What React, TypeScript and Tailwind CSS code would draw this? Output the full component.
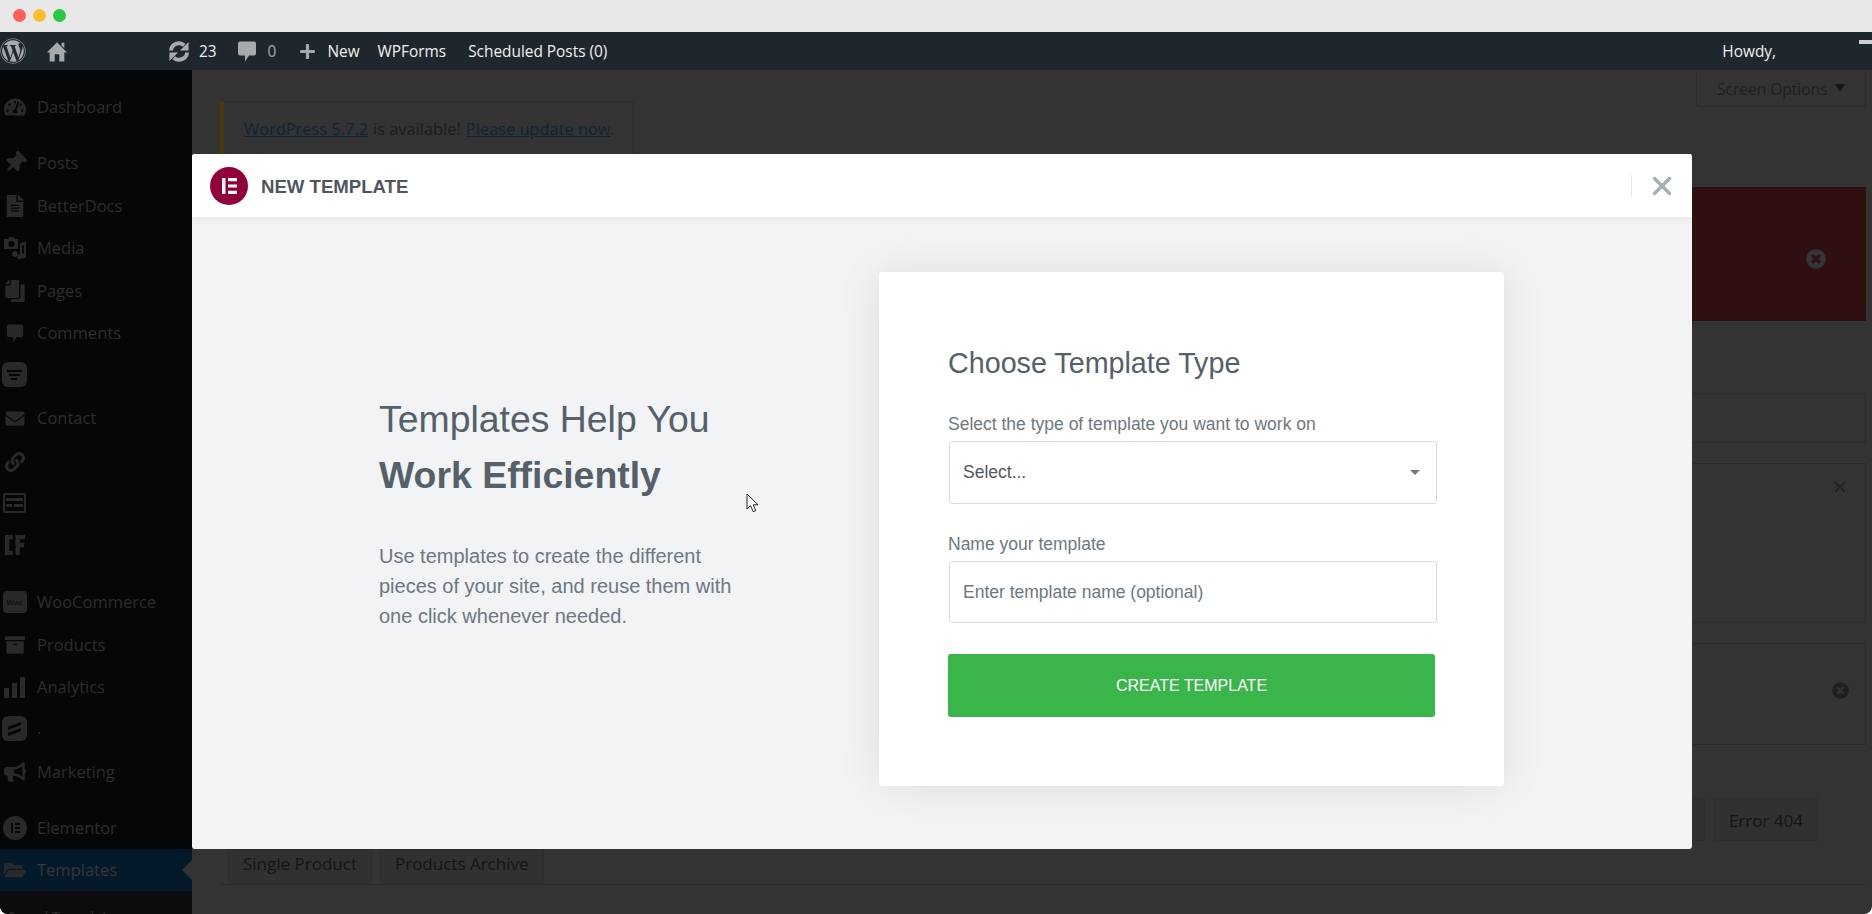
import { FaArchive, FaBullhorn, FaCopy, FaEnvelope, FaFileAlt, FaFolderOpen, FaLink, FaPlus, FaTachometerAlt, FaThumbtack, FaWordpress, FaTimesCircle } from 'react-icons/fa';
import { X } from 'lucide-react';
import type { ReactNode } from 'react';

const wpFont = "font-['Open_Sans',sans-serif]";
const formFont = "font-['Liberation_Sans',Arial,sans-serif]";

function CommentIcon({ className }: { className?: string }) {
    return (
        <svg viewBox="0 0 20 22" className={className} fill="currentColor">
            <path d="M3 1h14a2 2 0 0 1 2 2v10a2 2 0 0 1-2 2h-5l-4 6v-6H3a2 2 0 0 1-2-2V3a2 2 0 0 1 2-2z" />
        </svg>
    );
}

function HomeIcon({ className }: { className?: string }) {
    return (
        <svg viewBox="0 0 24 24" className={className} fill="currentColor">
            <path d="M12 2l11 11h-3v10h-5.500v-8h-5v8H4V13H1z" />
            <path d="M17 2.500h3v6l-3-3z" />
        </svg>
    );
}

function UpdateIcon({ className }: { className?: string }) {
    return (
        <svg viewBox="0 0 24 24" className={className}>
            <g fill="currentColor" stroke="currentColor">
                <path d="M3.500 11a8.500 8.500 0 0 1 14-5.500" fill="none" strokeWidth="4" />
                <path d="M22 2v9h-9z" strokeWidth="0" />
                <path d="M20.500 13a8.500 8.500 0 0 1-14 5.500" fill="none" strokeWidth="4" />
                <path d="M2 22v-9h9z" strokeWidth="0" />
            </g>
        </svg>
    );
}

function MediaIcon() {
    return (
        <svg viewBox="0 0 24 24" className="h-[24px] w-[24px]" fill="currentColor">
            <path d="M1 3h4l1.500-2h4L12 3h3v10H1zM8.500 5a3 3 0 1 0 0 6 3 3 0 0 0 0-6z" />
            <path d="M17 7l6-1v14a2.500 2.500 0 1 1-2-2.400V9l-2 .4V21a2.500 2.500 0 1 1-2-2.400z" />
            <path d="M12 15a3 3 0 1 0 .01 0z" />
        </svg>
    );
}

function ElementorGlyph({ className }: { className?: string }) {
    return (
        <svg viewBox="0 0 38 38" className={className}>
            <circle cx="19" cy="19" r="19" fill="currentColor" />
            <path d="M12 11h3.500v16H12zM18 11h9v3.200h-9zM18 17.400h9v3.200h-9zM18 23.800h9V27h-9z" fill="#fff" />
        </svg>
    );
}

function ElementorCircle() {
    return (
        <svg viewBox="0 0 24 24" className="h-[24px] w-[24px]">
            <circle cx="12" cy="12" r="12" fill="currentColor" />
            <path d="M8 7h2v10H8zM12 7h5v2h-5zM12 11h5v2h-5zM12 15h5v2h-5z" fill="#050608" />
        </svg>
    );
}

const sideIcon = 'h-[22px] w-[22px]';

const menu: { label: string; gap: string; icon: ReactNode; active?: boolean }[] = [
    { label: 'Dashboard', gap: 'mt-0', icon: <FaTachometerAlt className={sideIcon} /> },
    { label: 'Posts', gap: 'mt-[14px]', icon: <FaThumbtack className={`${sideIcon} rotate-45`} /> },
    { label: 'BetterDocs', gap: 'mt-px', icon: <FaFileAlt className="h-[22px] w-[18px]" /> },
    { label: 'Media', gap: 'mt-0', icon: <MediaIcon /> },
    { label: 'Pages', gap: 'mt-px', icon: <FaCopy className="h-[22px] w-[20px] -scale-x-100" /> },
    { label: 'Comments', gap: 'mt-0', icon: <CommentIcon className="h-[21px] w-[18px]" /> },
    {
        label: '',
        gap: '-mt-px',
        icon: (
            <svg viewBox="0 0 25 25" className="h-[25px] w-[25px]">
                <rect width="25" height="25" rx="6" fill="currentColor" />
                <path d="M5 8h15v2H5zM7 12h11v2H7zM9 16h6v2H9z" fill="#050608" />
            </svg>
        ),
    },
    { label: 'Contact', gap: 'mt-[2px]', icon: <FaEnvelope className="h-[19px] w-[22px]" /> },
    { label: '', gap: 'mt-[2px]', icon: <FaLink className="h-[22px] w-[20px]" /> },
    {
        label: '',
        gap: '-mt-px',
        icon: (
            <svg viewBox="0 0 23 20" className="h-[20px] w-[23px]">
                <rect x="1" y="1" width="21" height="18" rx="1" fill="none" stroke="currentColor" strokeWidth="2" />
                <path d="M3 5h17v3H3zM3 11h6v3H3zM11 11h9v3h-9z" fill="currentColor" />
            </svg>
        ),
    },
    {
        label: '',
        gap: 'mt-0',
        icon: (
            <svg viewBox="0 0 23 23" className="h-[22px] w-[20px]">
                <path d="M0 0h9v5H5v13h4v5H0zM12 0h11v5h-6v4h5v5h-5v9h-5z" fill="currentColor" />
            </svg>
        ),
    },
    {
        label: 'WooCommerce',
        gap: 'mt-[15px]',
        icon: (
            <span className="flex h-[22px] w-[24px] items-center justify-center rounded-[4px] bg-[#27292b] text-[8px] italic leading-none text-[#050608]">
                Woo
            </span>
        ),
    },
    { label: 'Products', gap: 'mt-px', icon: <FaArchive className="h-[20px] w-[22px]" /> },
    {
        label: 'Analytics',
        gap: 'mt-0',
        icon: (
            <svg viewBox="0 0 21 21" className="h-[21px] w-[21px]">
                <path d="M0 11h5v10H0zM8 6h5v15H8zM16 0h5v21h-5z" fill="currentColor" />
            </svg>
        ),
    },
    {
        label: '.',
        gap: '-mt-px',
        icon: (
            <svg viewBox="0 0 25 25" className="h-[25px] w-[25px]">
                <rect width="25" height="25" rx="6" fill="currentColor" />
                <path d="M6 11l13-5v3L6 14zM6 17l13-5v3L6 20z" fill="#050608" />
            </svg>
        ),
    },
    { label: 'Marketing', gap: 'mt-[2px]', icon: <FaBullhorn className={sideIcon} /> },
    { label: 'Elementor', gap: 'mt-[14px]', icon: <ElementorCircle /> },
    { label: 'Templates', gap: 'mt-0', icon: <FaFolderOpen className="h-[20px] w-[22px]" />, active: true },
];

function Sidebar() {
    return (
        <aside className={`flex w-[192px] shrink-0 flex-col bg-[#050608] pt-[16px] text-[#2b2d2f] ${wpFont}`}>
            {menu.map((item, i) => (
                <div
                    key={i}
                    className={`relative flex h-[42px] shrink-0 items-center ${item.gap} ${item.active ? 'bg-[#04192a] text-[#34373a]' : ''}`}
                >
                    <span className="flex w-[29px] justify-center text-[#27292b]">{item.icon}</span>
                    <span className="ml-[8px] text-[16.5px]">{item.label}</span>
                    {item.active && (
                        <span className="absolute right-0 top-[11px] h-0 w-0 border-y-[10px] border-r-[10px] border-y-transparent border-r-[#333333]" />
                    )}
                </div>
            ))}
            {/* submenu, only the tops of its first line are in the picture */}
            <div className="flex-1 bg-[#0c0c0d] pl-[8px] pt-[16px] text-[14.5px] leading-[20px] text-[#2b2d2f]">Saved Templates</div>
        </aside>
    );
}

function AdminBar() {
    return (
        <header className={`flex h-[38px] items-center bg-[#1f272e] text-[15.4px] text-[#f0f0f1] ${wpFont}`}>
            <FaWordpress className="h-[26px] w-[26px] text-[#a7aaad]" />
            <HomeIcon className="ml-[20px] h-[23px] w-[22px] text-[#a7aaad]" />
            <UpdateIcon className="ml-[99px] h-[23px] w-[24px] text-[#a7aaad]" />
            <span className="ml-[8px] pt-[2px]">23</span>
            <CommentIcon className="ml-[20px] h-[23px] w-[20px] text-[#a7aaad]" />
            <span className="ml-[11px] pt-[2px] text-[#a7aaad]">0</span>
            <FaPlus className="ml-[23px] h-[17px] w-[17px] text-[#a7aaad]" />
            <span className="ml-[11px] pt-[2px]">New</span>
            <span className="ml-[18px] pt-[2px]">WPForms</span>
            <span className="ml-[22px] pt-[2px]">Scheduled Posts (0)</span>
            <span className="ml-auto mr-[96px] pt-[2px]">Howdy,</span>
        </header>
    );
}

function Tab({ children }: { children: ReactNode }) {
    return (
        <span className="flex h-[43px] items-center border border-[#2e2e2e] bg-[#313131] px-[14px] pt-[2px] text-[17px] text-[#141517]">
            {children}
        </span>
    );
}

function Backdrop() {
    return (
        <main className={`flex min-w-0 flex-1 flex-col bg-[#333333] pl-[28px] pr-[6px] ${wpFont}`}>
            <div className="flex items-start justify-between">
                <div className="mt-[31px] flex h-[54px] w-[414px] items-center border border-l-[4px] border-[#2d2d2d] border-l-[#4a3a0c] pl-[20px] pt-[2px] text-[16.4px] text-[#1c1c1c]">
                    <span className="text-[#0d2536] underline">WordPress 5.7.2</span>
                    <span className="ml-[5px]">is available!</span>
                    <span className="ml-[5px] text-[#0d2536] underline">Please update now</span>.
                </div>
                <div className="flex h-[37px] w-[170px] items-center rounded-b-[4px] border border-t-0 border-[#2c2c2c] pl-[20px] pt-[3px] text-[15.5px] text-[#1f2022]">
                    Screen Options
                    <span className="mb-[4px] ml-[8px] h-0 w-0 border-x-[5px] border-t-[8px] border-x-transparent border-t-[#1a1a1a]" />
                </div>
            </div>
            <div className="mt-[32px] flex h-[134px] items-center justify-end bg-[#2f0f0f] pr-[40px] pt-[10px]">
                <FaTimesCircle className="h-[20px] w-[20px] text-[#333538]" />
            </div>
            <div className="mt-[72px] h-[50px] border border-[#2c2c2c]" />
            <div className="mt-[20px] flex h-[160px] justify-end border border-[#2c2c2c] pr-[16px] pt-[14px]">
                <X className="h-[18px] w-[18px] text-[#1d1f21]" strokeWidth={2.2} />
            </div>
            <div className="mt-[20px] flex h-[102px] items-center justify-end border border-[#2c2c2c] pb-[7px] pr-[16px]">
                <FaTimesCircle className="h-[17px] w-[17px] text-[#1d1f21]" />
            </div>
            <div className="mt-[53px] flex justify-end gap-[9px] pr-[48px]">
                <Tab>Search Results</Tab>
                <Tab>Error 404</Tab>
            </div>
            <div className="flex gap-[8px] border-b border-[#2b2b2b] pl-[8px]">
                <Tab>Single Product</Tab>
                <Tab>Products Archive</Tab>
            </div>
        </main>
    );
}

function Modal() {
    return (
        <section className={`absolute left-[192px] top-[154px] flex h-[695px] w-[1500px] flex-col overflow-hidden rounded-[3px] bg-[#f1f3f5] ${formFont}`}>
            <div className="relative z-10 flex h-[63px] shrink-0 items-center bg-white pl-[18px] pr-[15px] shadow-[0_2px_8px_rgba(0,0,0,0.06)]">
                <ElementorGlyph className="h-[38px] w-[38px] text-[#92003b]" />
                <h2 className="ml-[13px] pt-[2px] text-[18.6px] font-bold text-[#4f565c]">NEW TEMPLATE</h2>
                <span className="ml-auto h-[22px] w-px bg-[#e6e9ec]" />
                <X className="ml-[15px] h-[30px] w-[30px] text-[#a4afb7]" strokeWidth={2.7} />
            </div>
            <div className="flex flex-1">
                <div className="w-[687px] shrink-0 pl-[187px] pt-[174px]">
                    <h1 className="text-[37.4px] leading-[56px] text-[#556068]">
                        Templates Help You
                        <br />
                        <b>Work Efficiently</b>
                    </h1>
                    <p className="mt-[38px] w-[380px] text-[20px] leading-[30px] text-[#6d7882]">
                        Use templates to create the different pieces of your site, and reuse them with one click whenever needed.
                    </p>
                </div>
                <div className="mt-[55px] h-[514px] w-[625px] rounded-[3px] bg-white pl-[69px] pr-[67px] pt-[76px] shadow-[0_0_45px_rgba(0,0,0,0.09)]">
                    <h3 className="text-[28.7px] leading-[30px] text-[#556068]">Choose Template Type</h3>
                    <label className="mt-[36px] block text-[17.5px] leading-[20px] text-[#6d7882]">Select the type of template you want to work on</label>
                    <div className="ml-px mt-[7px] flex h-[63px] w-[488px] items-center justify-between rounded-[3px] border border-[#d5dadf] pl-[13px] pr-[16px] text-[17.5px] text-[#515962]">
                        Select...
                        <span className="h-0 w-0 border-x-[5px] border-t-[5px] border-x-transparent border-t-[#6d7882]" />
                    </div>
                    <label className="mt-[30px] block text-[17.5px] leading-[20px] text-[#6d7882]">Name your template</label>
                    <input
                        readOnly
                        placeholder="Enter template name (optional)"
                        className="ml-px mt-[7px] block h-[62px] w-[488px] rounded-[3px] border border-[#d5dadf] bg-white pl-[13px] text-[17.5px] text-[#515962] outline-none placeholder:text-[#6d7882]"
                    />
                    <button className="mt-[31px] flex h-[63px] w-[487px] items-center justify-center rounded-[3px] bg-[#39b54a] text-[16px] text-white">
                        CREATE TEMPLATE
                    </button>
                </div>
            </div>
        </section>
    );
}

export default function App() {
    return (
        <div className="relative flex h-[914px] w-[1872px] flex-col overflow-hidden rounded-b-[8px] bg-white">
            {/* window chrome */}
            <div className="flex h-[32px] shrink-0 items-center gap-[7px] bg-[#e8e8e8] pb-[1px] pl-[13px]">
                <span className="h-[13px] w-[13px] rounded-full bg-[#ff5f57]" />
                <span className="h-[13px] w-[13px] rounded-full bg-[#febc2e]" />
                <span className="h-[13px] w-[13px] rounded-full bg-[#28c840]" />
            </div>
            <AdminBar />
            <div className="flex min-h-0 flex-1">
                <Sidebar />
                <Backdrop />
            </div>
            <span className="absolute right-0 top-[40px] h-[4px] w-[13px] bg-[#cfcfcf]" />
            <Modal />
            <svg viewBox="0 0 13 20" className="absolute left-[746px] top-[493px] h-[20px] w-[13px]">
                <path d="M1 1v15l3.600-3.300 2.600 6 2.600-1.100-2.600-5.800H12z" fill="#fff" stroke="#222" strokeWidth="1" />
            </svg>
        </div>
    );
}
